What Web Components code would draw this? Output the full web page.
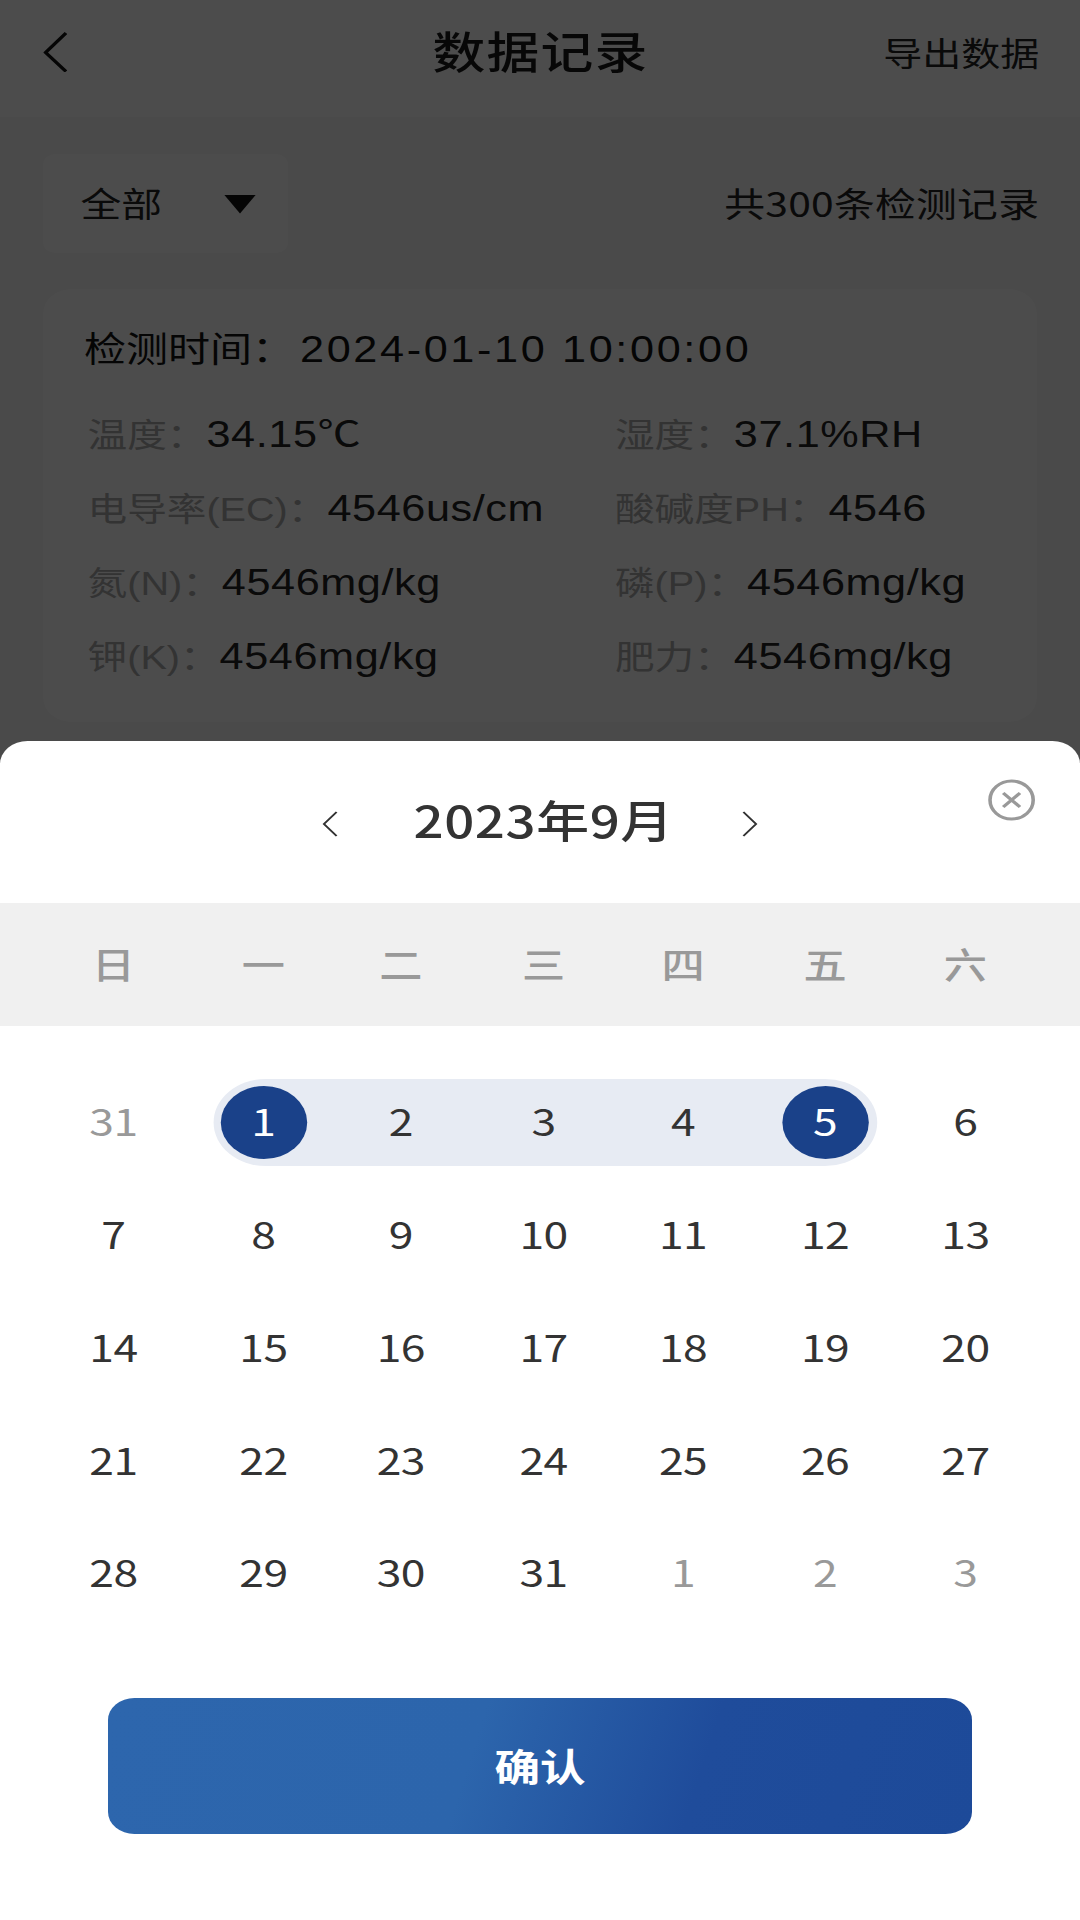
<!DOCTYPE html>
<html lang="zh-CN">
<head>
<meta charset="utf-8">
<title>数据记录</title>
<style>
  html, body { margin: 0; padding: 0; background: #fff; overflow: hidden; }
  body { font-family: "Noto Sans CJK SC", "Liberation Sans", sans-serif; }
</style>
</head>
<body>
<app-registros></app-registros>
<script>
const FUENTE_LATINA = `"Liberation Sans", "Noto Sans CJK SC", sans-serif`;

class BarraNav extends HTMLElement {
    connectedCallback() {
        this.attachShadow({ mode: "open" }).innerHTML = `
            <style>
                :host { display: block; height: 117px; background: #fff; }
                .fila { position: relative; display: flex; align-items: center; justify-content: space-between; height: 104px; padding: 0 34px 0 36px; }
                svg { display: block; width: 20px; height: 40px; }
                h1 { position: absolute; left: 1px; right: 0; top: 24px; margin: 0; line-height: 52px; text-align: center; font-size: 44px; font-weight: 500; letter-spacing: 1px; color: #1a1a1a; }
                span { font-size: 32.500px; color: #222; margin-top: -2px; }
            </style>
            <div class="fila">
                <svg viewBox="0 0 20 40" fill="none" stroke="#111" stroke-width="3"><path d="M19 1 2 20.500 19 39.500"/></svg>
                <h1><slot></slot></h1>
                <span>导出数据</span>
            </div>`;
    }
}

class FiltroFila extends HTMLElement {
    connectedCallback() {
        this.attachShadow({ mode: "open" }).innerHTML = `
            <style>
                :host { display: flex; align-items: center; justify-content: space-between; margin: 37px 34px 0 36px; height: 99px; color: #222; font-size: 34px; }
                .selector { display: flex; align-items: center; width: 204px; height: 99px; box-sizing: border-box; padding: 0 26px 0 31px; justify-content: space-between; background: #fff; border-radius: 10px; }
                span { margin-top: -2px; }
                .total { letter-spacing: 0.200px; }
                svg { display: block; width: 28px; height: 20px; }
            </style>
            <div class="selector">
                <span>全部</span>
                <svg viewBox="0 0 28 20"><path d="M1 1h26L14 19.500z" fill="#111"/></svg>
            </div>
            <span class="total"><slot></slot></span>`;
    }
}

class TarjetaRegistro extends HTMLElement {
    connectedCallback() {
        this.attachShadow({ mode: "open" }).innerHTML = `
            <style>
                :host { display: block; margin: 36px 36px 0; height: 433px; box-sizing: border-box; padding: 34px 0 0 34px; background: #fff; border-radius: 24px; }
                .tiempo { display: flex; align-items: baseline; gap: 5px; font-size: 35px; line-height: 48px; color: #111; margin-bottom: 38px; white-space: nowrap; }
                .tiempo b { font-family: ${FUENTE_LATINA}; font-weight: 400; font-size: 36px; letter-spacing: 2.200px; }
                .rejilla { display: grid; grid-template-columns: 439.500px 1fr; grid-auto-rows: 74px; margin-left: 3px; }
            </style>
            <div class="tiempo"><span>检测时间：</span><b>${this.getAttribute("tiempo")}</b></div>
            <div class="rejilla"><slot></slot></div>`;
    }
}

class DatoRegistro extends HTMLElement {
    connectedCallback() {
        this.attachShadow({ mode: "open" }).innerHTML = `
            <style>
                :host { display: block; font-family: ${FUENTE_LATINA}; font-size: 33px; line-height: 46px; color: #aaa; white-space: nowrap; }
                b { font-weight: 400; font-size: 36px; letter-spacing: 0.500px; color: #222; }
            </style>
            ${this.getAttribute("label")}：<b>${this.getAttribute("valor")}</b>`;
    }
}

class CalendarioRango extends HTMLElement {
    connectedCallback() {
        const semana = ["日", "一", "二", "三", "四", "五", "六"];
        const dias = [
            31, 1, 2, 3, 4, 5, 6,
            7, 8, 9, 10, 11, 12, 13,
            14, 15, 16, 17, 18, 19, 20,
            21, 22, 23, 24, 25, 26, 27,
            28, 29, 30, 31, 1, 2, 3
        ];
        const celdas = dias.map((d, i) => {
            let cls = "dia";
            if (i === 0 || i > 31) cls += " fuera";
            if (i === 1 || i === 5) cls += " activo";
            return `<div class="${cls}" style="grid-row:${Math.floor(i / 7) + 1};grid-column:${i % 7 + 1}"><span>${d}</span></div>`;
        }).join("");

        this.attachShadow({ mode: "open" }).innerHTML = `
            <style>
                :host { display: block; --cols: 123px 127px 102px 136px 96.500px 140px 94px; }
                .semana, .dias { display: grid; grid-template-columns: var(--cols); padding-left: 33px; }
                .semana { height: 123px; align-items: center; background: #f0f0f0; font-size: 36px; font-weight: 500; color: #999; text-align: center; }
                .semana div { margin-top: -3px; }
                .dias { grid-auto-rows: 112.750px; margin-top: 40px; }
                .rango { grid-row: 1; grid-column: 2 / 7; align-self: center; height: 87px; margin: 0 27px 0 21.500px; background: #e7ebf3; border-radius: 44px; }
                .dia { display: flex; align-items: center; justify-content: center; font-size: 37px; letter-spacing: -0.500px; color: #333; z-index: 1; }
                .dia.fuera { color: #999; }
                .dia span { display: flex; align-items: center; justify-content: center; box-sizing: border-box; width: 72px; height: 73px; padding-bottom: 4px; border-radius: 50%; }
                .dia.activo span { background: #1a4189; color: #fff; }
            </style>
            <div class="semana">${semana.map((s) => `<div>${s}</div>`).join("")}</div>
            <div class="dias"><div class="rango"></div>${celdas}</div>`;
    }
}

class HojaFecha extends HTMLElement {
    connectedCallback() {
        this.attachShadow({ mode: "open" }).innerHTML = `
            <style>
                :host { position: absolute; left: 0; right: 0; bottom: 0; height: 1179px; background: #fff; border-radius: 23px 23px 0 0; }
                .cabecera { position: relative; display: flex; align-items: center; justify-content: center; height: 162px; }
                h2 { margin: -7px 57px 0 63px; font-size: 44px; font-weight: 500; letter-spacing: 0.500px; color: #333; }
                svg { display: block; }
                .flecha { margin-top: 3px; }
                .cerrar { position: absolute; top: 38px; right: 37px; }
                .confirmar { display: flex; align-items: center; justify-content: center; box-sizing: border-box; width: 720px; height: 136px; margin: 68px auto 0; padding-bottom: 2px; border-radius: 22px; font-size: 38px; font-weight: 700; color: #fff;
                    background: linear-gradient(105deg, #2d66ad 0%, #2c65ac 42%, #1f4c9b 68%, #1d4a99 100%); }
            </style>
            <div class="cabecera">
                <svg class="flecha" width="14" height="28" viewBox="0 0 14 28" fill="none" stroke="#333" stroke-width="1.800"><path d="M12.500 2 2 14l10.500 12"/></svg>
                <h2>2023年9月</h2>
                <svg class="flecha" width="14" height="28" viewBox="0 0 14 28" fill="none" stroke="#333" stroke-width="1.800"><path d="M1.500 2 12 14 1.500 26"/></svg>
                <svg class="cerrar" width="40" height="42" viewBox="0 0 40 42" fill="none" stroke="#999" stroke-width="3"><ellipse cx="20" cy="21" rx="18" ry="19"/><path d="M13 14l14 14M27 14 13 28"/></svg>
            </div>
            <calendario-rango></calendario-rango>
            <div class="confirmar">确认</div>`;
    }
}

class AppRegistros extends HTMLElement {
    connectedCallback() {
        this.attachShadow({ mode: "open" }).innerHTML = `
            <style>
                /* la captura original esta estirada en horizontal: 900 -> 1080 */
                :host { display: block; position: relative; width: 900px; height: 1920px; overflow: hidden; background: #f7f7f7; font-family: "Noto Sans CJK SC", "Liberation Sans", sans-serif; transform: scaleX(1.2); transform-origin: 0 0; }
                .velo { position: absolute; inset: 0; background: rgba(0, 0, 0, .7); }
            </style>
            <barra-nav>数据记录</barra-nav>
            <filtro-fila>共300条检测记录</filtro-fila>
            <tarjeta-registro tiempo="2024-01-10 10:00:00">
                <dato-registro label="温度" valor="34.15℃"></dato-registro>
                <dato-registro label="湿度" valor="37.1%RH"></dato-registro>
                <dato-registro label="电导率(EC)" valor="4546us/cm"></dato-registro>
                <dato-registro label="酸碱度PH" valor="4546"></dato-registro>
                <dato-registro label="氮(N)" valor="4546mg/kg"></dato-registro>
                <dato-registro label="磷(P)" valor="4546mg/kg"></dato-registro>
                <dato-registro label="钾(K)" valor="4546mg/kg"></dato-registro>
                <dato-registro label="肥力" valor="4546mg/kg"></dato-registro>
            </tarjeta-registro>
            <div class="velo"></div>
            <hoja-fecha></hoja-fecha>`;
    }
}

customElements.define("barra-nav", BarraNav);
customElements.define("filtro-fila", FiltroFila);
customElements.define("tarjeta-registro", TarjetaRegistro);
customElements.define("dato-registro", DatoRegistro);
customElements.define("calendario-rango", CalendarioRango);
customElements.define("hoja-fecha", HojaFecha);
customElements.define("app-registros", AppRegistros);
</script>
</body>
</html>
